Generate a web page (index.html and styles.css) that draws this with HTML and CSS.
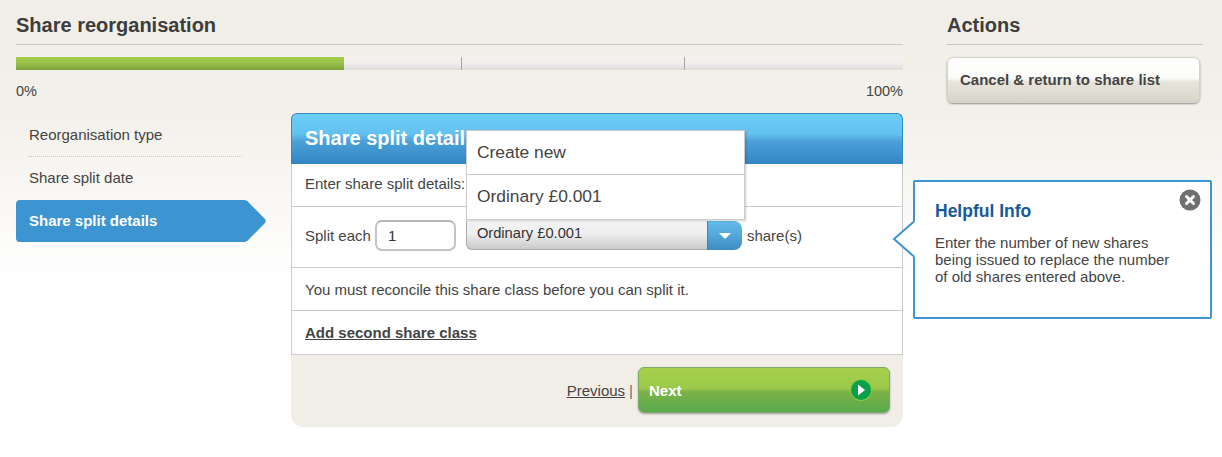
FILE: index.html
```html
<!DOCTYPE html>
<html lang="en">
<head>
  <meta charset="UTF-8">
  <title>Share reorganisation</title>
  <link rel="stylesheet" href="styles.css">
</head>
<body>
  <div class="page">
    <div class="main">
      <h1 class="page-title">Share reorganisation</h1>
      <div class="progress">
        <div class="progress-fill"></div>
        <div class="progress-tick tick-1"></div>
        <div class="progress-tick tick-2"></div>
      </div>
      <div class="progress-labels">
        <span>0%</span>
        <span>100%</span>
      </div>

      <div class="wizard">
        <ul class="steps">
          <li class="step">Reorganisation type</li>
          <li class="step">Share split date</li>
          <li class="step step-active">
            Share split details
            <svg class="step-arrow" width="24" height="42" viewBox="0 0 24 42"><path d="M0 0H2Q4 0 5.500 1.300L23 19Q24.500 21 23 23L5.500 40.700Q4 42 2 42H0Z" fill="#3c94d0"/></svg>
          </li>
        </ul>

        <div class="panel">
          <h2 class="panel-head">Share split details</h2>
          <div class="panel-row row-intro">Enter share split details:</div>
          <div class="panel-row row-split">
            <label class="split-label">Split each</label>
            <input class="split-input" type="text" value="1">
            <div class="select">
              <span class="select-text">Ordinary £0.001</span>
              <span class="select-btn"><span class="select-caret"></span></span>
            </div>
            <span class="split-suffix">share(s)</span>
          </div>
          <div class="panel-row row-note">You must reconcile this share class before you can split it.</div>
          <div class="panel-row row-add"><a href="#" class="add-link">Add second share class</a></div>
          <div class="panel-foot">
            <a href="#" class="prev-link">Previous</a>
            <span class="foot-sep">|</span>
            <a href="#" class="next-btn">
              <span>Next</span>
              <svg class="next-icon" width="22" height="22" viewBox="0 0 22 22"><circle cx="11" cy="11" r="11" fill="#8cc63f"/><circle cx="11" cy="11" r="10" fill="#0ba14b"/><path d="M8 5.500L15 11L8 16.500Z" fill="#fff"/></svg>
            </a>
          </div>

          <ul class="select-menu">
            <li>Create new</li>
            <li>Ordinary £0.001</li>
          </ul>
        </div>
      </div>
    </div>

    <div class="side">
      <h1 class="page-title">Actions</h1>
      <a href="#" class="cancel-btn">Cancel &amp; return to share list</a>
    </div>
  </div>

  <div class="help">
    <svg class="help-arrow" width="24" height="38" viewBox="0 0 24 38"><path d="M24 1.500H22L2 19L22 36.500H24Z" fill="#fff"/><path d="M22 1.500L2 19L22 36.500" fill="none" stroke="#3c94d0" stroke-width="2"/></svg>
    <svg class="help-close" width="22" height="22" viewBox="0 0 22 22"><circle cx="11" cy="11" r="10.500" fill="#6f6f6f"/><path d="M7.500 7.500L14.500 14.500M14.500 7.500L7.500 14.500" stroke="#fff" stroke-width="3" stroke-linecap="round"/></svg>
    <h3 class="help-title">Helpful Info</h3>
    <p class="help-text">Enter the number of new shares<br>being issued to replace the number<br>of old shares entered above.</p>
  </div>
</body>
</html>
```

FILE: styles.css
```css
html, body {
  margin: 0;
  padding: 0;
}
body {
  height: 457px;
  overflow: hidden;
  position: relative;
  font-family: "Liberation Sans", Arial, sans-serif;
  font-size: 15px;
  color: #444;
  background: linear-gradient(#f1eee7 0, #f3f0ea 110px, #fff 280px);
}
a {
  color: inherit;
}
ul {
  list-style: none;
  margin: 0;
  padding: 0;
}

.page {
  display: flex;
  padding-left: 16px;
}
.main {
  width: 887px;
}
.side {
  width: 256px;
  margin-left: 44px;
}
.page-title {
  margin: 0;
  height: 44px;
  line-height: 51px;
  font-size: 20px;
  font-weight: bold;
  color: #3d3d3d;
  border-bottom: 1px solid #cbc7c0;
}

/* progress */
.progress {
  position: relative;
  height: 13px;
  margin-top: 12px;
  background: linear-gradient(#f3f2f0, #efeeec 50%, #dddcd9);
}
.progress-fill {
  width: 328px;
  height: 100%;
  background: linear-gradient(#a4cf4d 0, #98c249 45%, #7ea23e 100%);
}
.progress-tick {
  position: absolute;
  top: 0;
  width: 1px;
  height: 100%;
  background: #a5a5a3;
}
.tick-1 {
  left: 445px;
}
.tick-2 {
  left: 668px;
}
.progress-labels {
  display: flex;
  justify-content: space-between;
  margin-top: 12px;
  line-height: 18px;
  font-size: 14.500px;
}

/* steps */
.wizard {
  display: flex;
  margin-top: 13px;
}
.steps {
  width: 251px;
  margin-right: 24px;
  padding-top: 1px;
}
.step {
  height: 42px;
  line-height: 42px;
  width: 213px;
  margin-left: 12px;
  padding-left: 1px;
  border-bottom: 1px dotted #c9c6c0;
  color: #444;
}
.step:nth-child(2) {
  border-bottom: 0;
  height: 43px;
}
.step-active {
  position: relative;
  width: 213px;
  height: 42px;
  line-height: 42px;
  margin-left: 0;
  padding-left: 13px;
  border: 0;
  border-radius: 4px 0 0 4px;
  background: #3c94d0;
  color: #fff;
  font-weight: bold;
}
.step-arrow {
  position: absolute;
  top: 0;
  left: 226px;
}

/* panel */
.panel {
  position: relative;
  width: 612px;
}
.panel-head {
  margin: 0;
  height: 51px;
  padding-left: 13px;
  box-sizing: border-box;
  line-height: 48px;
  font-size: 20px;
  font-weight: bold;
  color: #fff;
  border-radius: 6px 6px 0 0;
  border: 1px solid #3388c6;
  border-bottom: 0;
  background: linear-gradient(#6ccdf8 0, #63c1ef 40%, #4ba0d8 55%, #3285c3 100%);
}
.panel-row {
  box-sizing: border-box;
  padding-left: 13px;
  background: #fff;
  border-left: 1px solid #ccc;
  border-right: 1px solid #ccc;
  border-bottom: 1px solid #ccc;
}
.row-intro {
  height: 43px;
  line-height: 40px;
}
.row-split {
  display: flex;
  align-items: center;
  height: 61px;
  padding-bottom: 3px;
}
.row-note {
  height: 43px;
  line-height: 43px;
}
.row-add {
  height: 44px;
  line-height: 44px;
}
.split-label {
  margin-right: 4px;
}
.split-input {
  width: 81px;
  height: 31px;
  box-sizing: border-box;
  padding: 0 0 0 11px;
  border: 2px solid #c4c4c4;
  border-top-color: #b5b5b5;
  border-radius: 7px;
  font: 15px "Liberation Sans", Arial, sans-serif;
  color: #333;
  margin-right: 10px;
  outline: none;
}
.select {
  display: flex;
  width: 276px;
  height: 29px;
}
.select-text {
  flex: 1;
  padding-left: 10px;
  line-height: 24px;
  font-size: 14.700px;
  color: #333;
  border: 1px solid #aaa;
  border-top: 0;
  border-right: 0;
  border-radius: 0 0 0 6px;
  background: linear-gradient(#f3f3f3 0, #efefef 45%, #c9c9c9 100%);
}
.select-btn {
  display: flex;
  align-items: center;
  justify-content: center;
  width: 34px;
  border-left: 1px solid #6c7780;
  border-radius: 0 8px 8px 0;
  background: linear-gradient(#63bdea 0, #55a9dc 45%, #3d8cc2 100%);
}
.select-caret {
  width: 0;
  height: 0;
  border-left: 6px solid transparent;
  border-right: 6px solid transparent;
  border-top: 6px solid #fff;
}
.split-suffix {
  margin-left: 5px;
}
.add-link {
  font-weight: bold;
  color: #444;
}

/* footer */
.panel-foot {
  display: flex;
  align-items: center;
  justify-content: flex-end;
  box-sizing: border-box;
  height: 72px;
  padding: 0 13px 2px 0;
  background: #f1eee7;
  border-radius: 0 0 12px 12px;
}
.prev-link {
  margin-right: 4px;
}
.foot-sep {
  margin-right: 5px;
  color: #6b6b6b;
}
.next-btn {
  display: flex;
  align-items: center;
  justify-content: space-between;
  box-sizing: border-box;
  width: 252px;
  height: 46px;
  padding: 0 17px 0 10px;
  border: 1px solid #7fa968;
  border-radius: 6px;
  box-shadow: 0 1px 2px rgba(0, 0, 0, 0.35);
  background: linear-gradient(#a5d04c 0, #9dc94b 46%, #7cb248 54%, #57aa4c 100%);
  color: #fff;
  font-weight: bold;
  text-decoration: none;
}

/* open select menu */
.select-menu {
  position: absolute;
  top: 17px;
  left: 175px;
  width: 277px;
  background: #fff;
  border: 1px solid #ccc;
  box-shadow: 1px 1px 2px rgba(0, 0, 0, 0.2);
  font-size: 17.400px;
  color: #444;
}
.select-menu li {
  height: 43px;
  line-height: 42px;
  padding-left: 10px;
}
.select-menu li + li {
  height: 44px;
  border-top: 1px solid #ccc;
}

/* actions */
.cancel-btn {
  display: block;
  box-sizing: border-box;
  width: 253px;
  height: 46px;
  margin: 12px 0 0 0;
  padding-left: 12px;
  line-height: 43px;
  border: 1px solid #d5d2ca;
  border-radius: 6px;
  box-shadow: 0 1px 2px rgba(0, 0, 0, 0.4);
  background: linear-gradient(#fff 0, #fbfbf9 46%, #e8e5dd 54%, #d7d3c8 100%);
  color: #444;
  font-weight: bold;
  text-decoration: none;
}

/* help popup */
.help {
  position: absolute;
  top: 180px;
  left: 913px;
  width: 299px;
  height: 139px;
  box-sizing: border-box;
  padding: 20px 0 0 20px;
  background: #fff;
  border: 2px solid #3c94d0;
  border-radius: 2px;
}
.help-arrow {
  position: absolute;
  top: 38px;
  left: -23px;
}
.help-close {
  position: absolute;
  top: 7px;
  right: 9px;
}
.help-title {
  margin: 0;
  font-size: 17.500px;
  line-height: 19px;
  font-weight: bold;
  color: #165a9c;
}
.help-text {
  margin: 13px 0 0;
  font-size: 15px;
  line-height: 17px;
  color: #444;
}
```
